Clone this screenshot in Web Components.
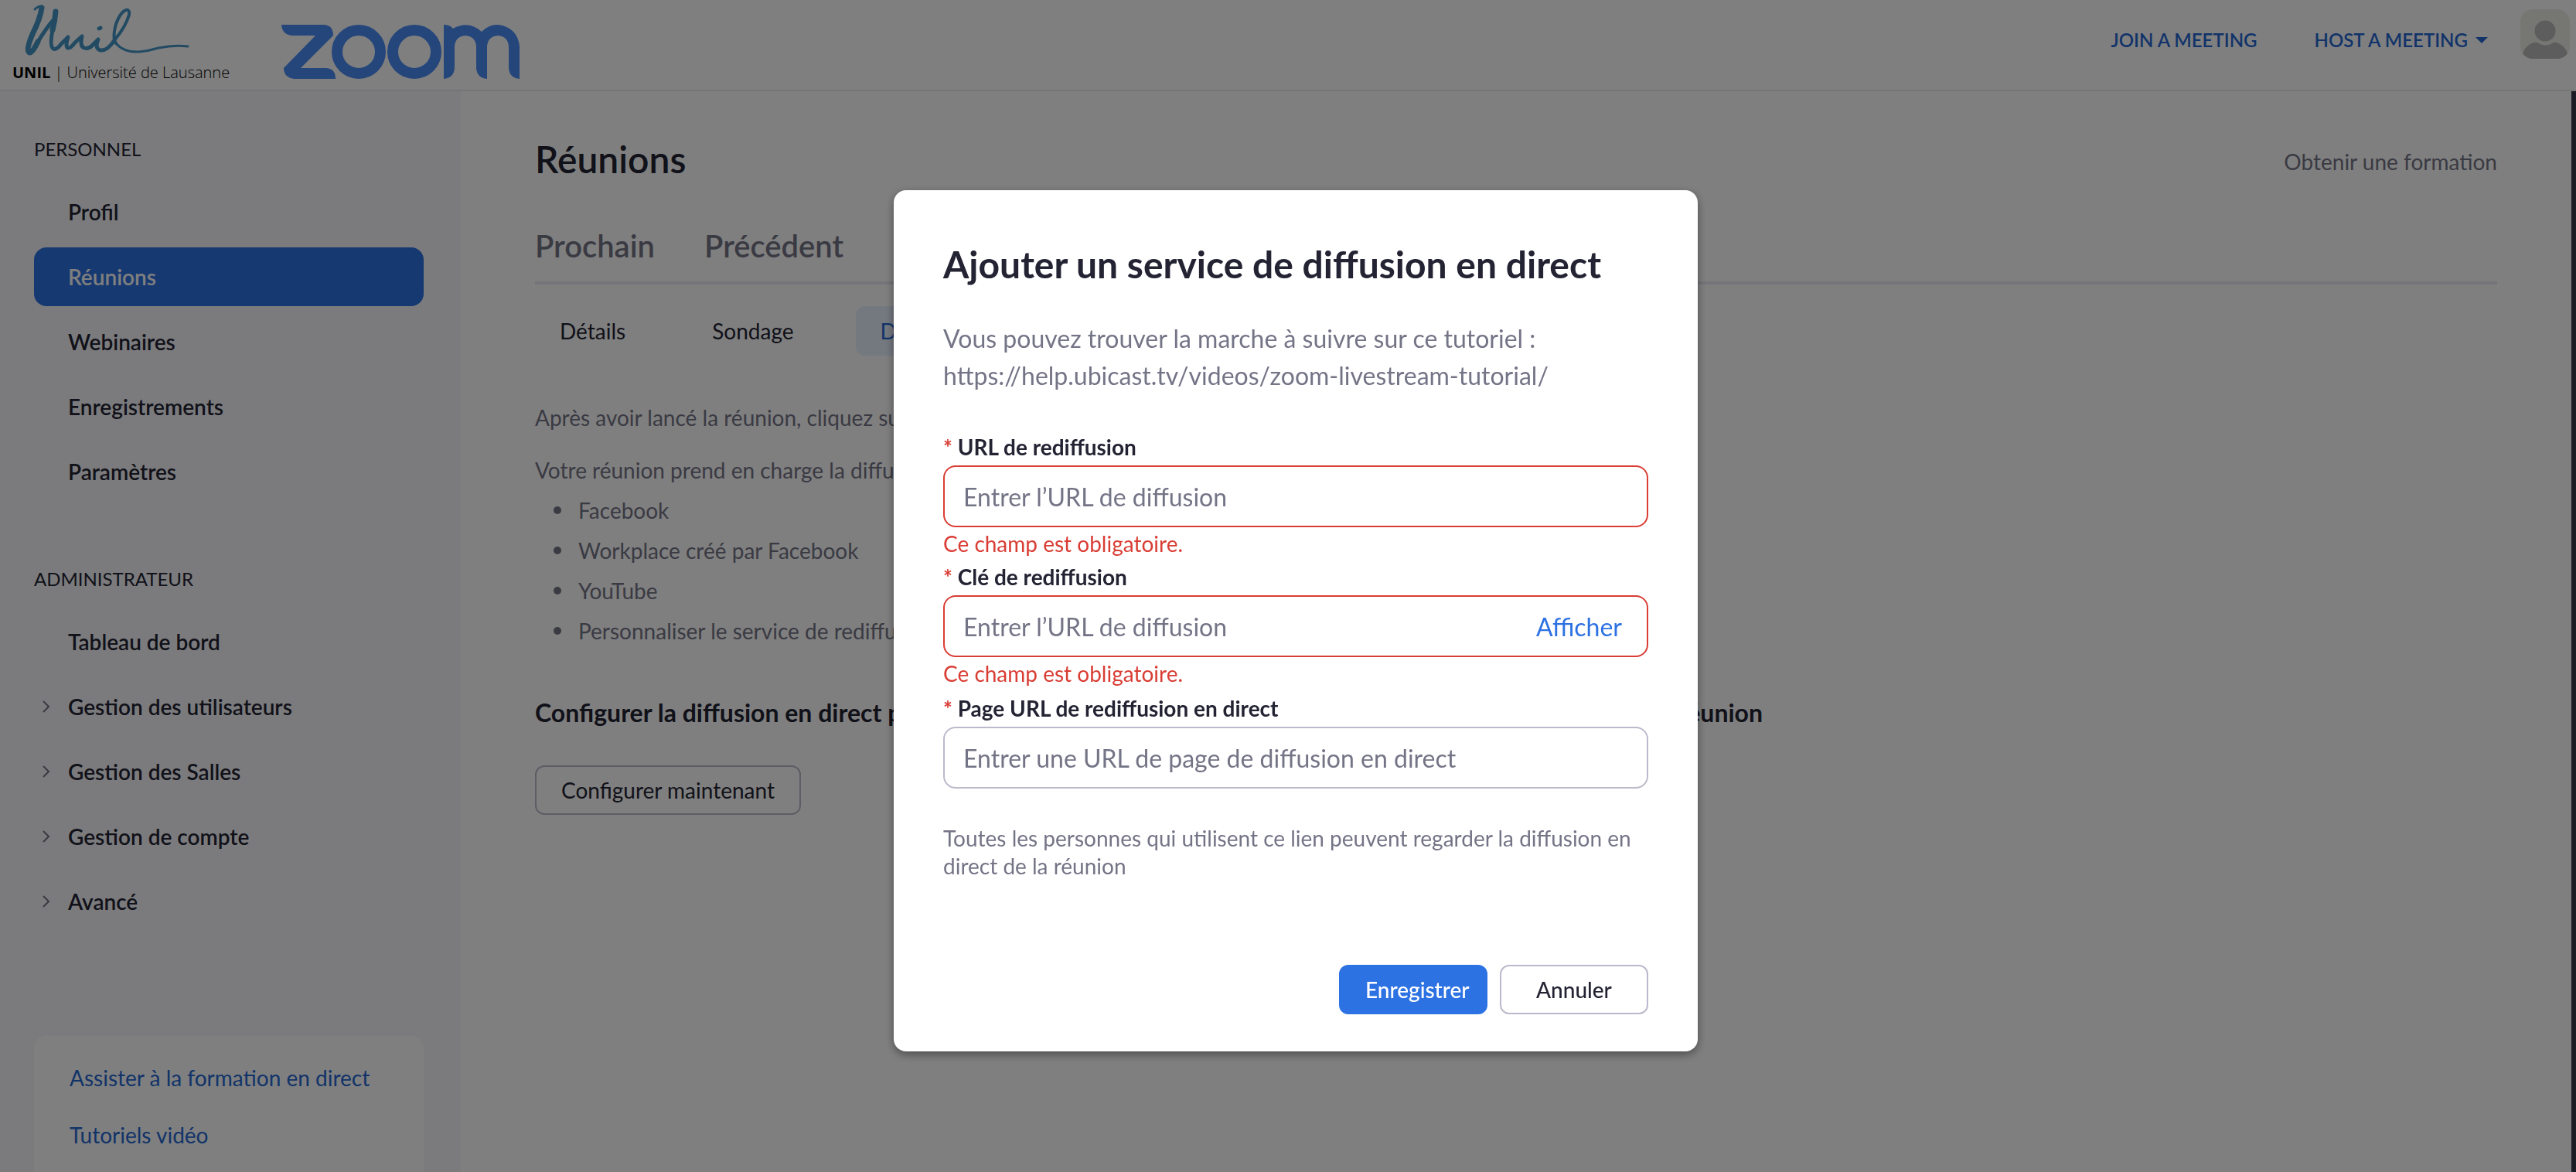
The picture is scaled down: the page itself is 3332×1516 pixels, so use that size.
<!DOCTYPE html>
<html lang="fr">
<head>
<meta charset="utf-8">
<title>Réunions - Zoom</title>
<style>
body {
	margin: 0;
	font-family: Lato, "Liberation Sans", sans-serif;
	font-size: 28px;
	color: #232333;
	background: #fff;
}
</style>
</head>
<body>
<zoom-app></zoom-app>

<script>
class BaseElement extends HTMLElement {
	constructor() {
		super();
		this.attachShadow({mode: 'open'});
	}
	render(html) {
		const tmpl = document.createElement('template');
		tmpl.innerHTML = html;
		this.shadowRoot.replaceChildren(tmpl.content.cloneNode(true));
	}
}

// Top bar: both logos on the left, meeting actions and avatar on the right
class TopBar extends BaseElement {
	connectedCallback() {
		this.render(`
<style>
:host {
	display: flex;
	align-items: flex-start;
	justify-content: space-between;
	height: 118px;
	box-sizing: border-box;
	padding: 0 8px 0 16px;
	background: #fff;
	border-bottom: 2px solid #ebebef;
}
a { color: #2467d3; text-decoration: none; }
.logos, nav { display: flex; align-items: flex-start; }
.logos { gap: 66px; }
.unil { width: 282px; color: #000; font: 300 20px/24px "Open Sans", "Noto Sans", sans-serif; white-space: nowrap; }
.unil b { font-weight: 700; }
.unil svg { margin: 4px 0 6px; }
.zoom { padding-top: 32px; }
svg { display: block; }
nav { font-size: 24px; line-height: 28px; font-weight: 600; }
.join { padding-top: 38px; margin-right: 74px; }
.host {
	display: flex;
	align-items: center;
	gap: 10px;
	margin: 38px 42px 0 0;
	padding: 0;
	border: 0;
	background: none;
	color: #2467d3;
	font: inherit;
}
.avatar { padding-top: 12px; }
</style>
<div class="logos">
	<a class="unil" href="#">
		<svg width="236" height="72" viewBox="16 4 236 72" fill="none" stroke="#4596c6" stroke-linecap="round" stroke-linejoin="round" aria-label="Unil" role="img">
			<path stroke-width="3" d="M45 12Q49 8 54 8"/>
			<path stroke-width="7" d="M54 10Q52 24 43 42Q34 62 37 67Q40 72 49 54"/>
			<path stroke-width="5" d="M49 54Q60 36 69 26"/>
			<path stroke-width="7" d="M72 15Q71 27 68 39"/>
			<path stroke-width="5" d="M68 39Q64 60 69 63Q73 65 79 57L88 48Q84 61 88 62Q91 63 97 55L106 47Q103 60 109 62Q115 64 121 57L127 51Q122 63 130 65Q139 66 148 52"/>
			<path stroke-width="4" d="M148 52Q163 34 167 19Q168 12 163 13Q156 15 150 31Q145 50 150 56"/>
			<path stroke-width="3" d="M150 56Q160 68 180 67Q192 66 205 62Q225 58 243 60"/>
			<path stroke-width="5" d="M128 37L130 36"/>
		</svg>
		<b>UNIL</b> | Université de Lausanne
	</a>
	<a class="zoom" href="#">
		<svg width="308" height="70" viewBox="0 0 308 70" fill="none" stroke="#4a8cf7" stroke-width="14" aria-label="zoom" role="img">
			<path fill="#4a8cf7" stroke="none" d="M0 0H54Q67 0 67 14L25 56H57Q70 56 70 70H16Q3 68 3 56L44 14H14Q1 13 0 0Z"/>
			<ellipse cx="100" cy="35" rx="28" ry="28"/>
			<ellipse cx="172" cy="35" rx="28" ry="28"/>
			<path fill="#4a8cf7" stroke="none" d="M210 0Q218 0 222 5Q242 -6 259 9Q271 -3 286 1Q306 7 308 28V70Q295 69 294 56V28Q293 15 280 14Q267 15 266 28V70Q253 69 252 56V28Q251 15 238 14Q225 15 224 28V56Q223 69 210 70Z"/>
		</svg>
	</a>
</div>
<nav>
	<a class="join" href="#">JOIN A MEETING</a>
	<button class="host">HOST A MEETING
		<svg width="16" height="8" viewBox="0 0 16 8"><path d="M0 0H16L8 8Z" fill="#2467d3"/></svg>
	</button>
	<a class="avatar" href="#" aria-label="Profil">
		<svg width="64" height="64" viewBox="0 0 64 64">
			<defs><clipPath id="r"><rect width="64" height="64" rx="16"/></clipPath></defs>
			<g clip-path="url(#r)">
				<rect width="64" height="64" fill="#edede7"/>
				<circle cx="32" cy="28" r="13.5" fill="#bababa"/>
				<path d="M2 64Q3 48 17 43H22Q32 50 43 43H47Q61 48 62 64Z" fill="#bababa"/>
			</g>
		</svg>
	</a>
</nav>`);
	}
}
customElements.define('top-bar', TopBar);

class SideItem extends BaseElement {
	connectedCallback() {
		const arrow = this.hasAttribute('expandable')
			? '<svg width="10" height="16" viewBox="0 0 10 16" fill="none" stroke="#747487" stroke-width="2"><path d="M1 1L8 8L1 15"/></svg>'
			: '';
		this.render(`
<style>
:host { display: block; }
a {
	display: flex;
	align-items: center;
	height: 76px;
	border-radius: 16px;
	color: #232333;
	font-weight: 600;
	text-decoration: none;
}
.arrow { width: 33px; padding-left: 11px; }
svg { display: block; }
:host([active]) a { background: #2d72e3; color: #fff; }
</style>
<a href="#"><span class="arrow">${arrow}</span><slot></slot></a>`);
	}
}
customElements.define('side-item', SideItem);

class SideBar extends BaseElement {
	connectedCallback() {
		this.render(`
<style>
:host {
	display: block;
	flex: 0 0 596px;
	box-sizing: border-box;
	padding: 56px 48px 0 44px;
	background: #f7f7fa;
}
h2 { margin: 0 0 24px; font-size: 24px; line-height: 38px; font-weight: 400; }
nav { display: flex; flex-direction: column; gap: 8px; margin-bottom: 82px; }
.help {
	display: flex;
	flex-direction: column;
	gap: 34px;
	margin-top: 136px;
	padding: 34px 46px 60px;
	border-radius: 16px;
	background: #fff;
}
.help a { color: #2467d3; line-height: 40px; text-decoration: none; }
</style>
<h2>PERSONNEL</h2>
<nav>
	<side-item>Profil</side-item>
	<side-item active>Réunions</side-item>
	<side-item>Webinaires</side-item>
	<side-item>Enregistrements</side-item>
	<side-item>Paramètres</side-item>
</nav>
<h2>ADMINISTRATEUR</h2>
<nav>
	<side-item>Tableau de bord</side-item>
	<side-item expandable>Gestion des utilisateurs</side-item>
	<side-item expandable>Gestion des Salles</side-item>
	<side-item expandable>Gestion de compte</side-item>
	<side-item expandable>Avancé</side-item>
</nav>
<div class="help">
	<a href="#">Assister à la formation en direct</a>
	<a href="#">Tutoriels vidéo</a>
</div>`);
	}
}
customElements.define('side-bar', SideBar);

class MeetingPage extends BaseElement {
	connectedCallback() {
		this.render(`
<style>
:host {
	display: block;
	flex: 1;
	padding: 58px 96px 0;
	border-right: 6px solid #39394d;
	color: #747487;
}
a { color: inherit; text-decoration: none; }
.head { display: flex; justify-content: space-between; align-items: center; }
.head a { padding-top: 6px; }
h1 { margin: 0; color: #232333; font-size: 48px; line-height: 60px; font-weight: 600; }
.tabs {
	display: flex;
	gap: 64px;
	margin-top: 54px;
	padding-bottom: 18px;
	border-bottom: 4px solid #e8e8f2;
	font-size: 40px;
	line-height: 56px;
	font-weight: 600;
}
.subtabs { display: flex; gap: 48px; margin: 28px 0 60px; color: #232333; }
.subtabs a { padding: 0 32px; border-radius: 12px; line-height: 64px; }
.subtabs .on { background: #e8f0ff; color: #2467d3; }
p { margin: 0 0 28px; line-height: 40px; }
ul { margin: -22px 0 58px; padding-left: 24px; list-style: none; line-height: 52px; }
li { display: flex; align-items: center; gap: 22px; }
li::before { content: ""; width: 10px; height: 10px; border-radius: 50%; background: #747487; }
h3 {
	display: flex;
	justify-content: space-between;
	max-width: 1588px;
	margin: 0 0 46px;
	color: #232333;
	font-size: 32px;
	line-height: 44px;
}
button {
	height: 64px;
	padding: 0 32px;
	border: 2px solid #babacc;
	border-radius: 12px;
	background: #fff;
	color: #232333;
	font: inherit;
}
</style>
<div class="head"><h1>Réunions</h1><a href="#">Obtenir une formation</a></div>
<div class="tabs"><a href="#">Prochain</a><a href="#">Précédent</a></div>
<div class="subtabs"><a href="#">Détails</a><a href="#">Sondage</a><a href="#" class="on">Direct</a></div>
<p>Après avoir lancé la réunion, cliquez sur</p>
<p>Votre réunion prend en charge la diffusion</p>
<ul>
	<li>Facebook</li>
	<li>Workplace créé par Facebook</li>
	<li>YouTube</li>
	<li>Personnaliser le service de rediffusion</li>
</ul>
<h3><span>Configurer la diffusion en direct par</span><span>réunion</span></h3>
<button>Configurer maintenant</button>`);
	}
}
customElements.define('meeting-page', MeetingPage);

// Labelled text box, with an optional error line and a slot at the right end of the box
class StreamField extends BaseElement {
	connectedCallback() {
		const error = this.getAttribute('error');
		this.render(`
<style>
:host { display: block; }
label { display: block; margin-bottom: 4px; line-height: 40px; font-weight: 700; }
label span { color: #d93d34; }
.box {
	display: flex;
	align-items: center;
	height: 80px;
	box-sizing: border-box;
	padding: 0 32px 0 24px;
	border: 2px solid #babacc;
	border-radius: 16px;
	font-size: 32px;
}
:host([error]) .box { border-color: #d93d34; }
input {
	flex: 1;
	min-width: 0;
	padding: 0;
	border: 0;
	outline: 0;
	background: none;
	color: inherit;
	font: inherit;
}
input::placeholder { color: #747487; opacity: 1; }
.error { padding-bottom: 2px; color: #d93d34; line-height: 42px; }
</style>
<label for="field"><span>*</span> ${this.getAttribute('label')}</label>
<div class="box"><input id="field" type="text" placeholder="${this.getAttribute('placeholder')}"><slot></slot></div>
${error ? `<div class="error">${error}</div>` : ''}`);
	}
}
customElements.define('stream-field', StreamField);

class StreamDialog extends BaseElement {
	connectedCallback() {
		this.render(`
<style>
/* backdrop over the whole page */
:host {
	position: fixed;
	inset: 0;
	display: flex;
	justify-content: center;
	align-items: flex-start;
	padding: 246px 0 0 20px;
	background: rgba(0, 0, 0, .5);
}
section {
	width: 1040px;
	box-sizing: border-box;
	padding: 64px 64px 48px;
	border-radius: 16px;
	background: #fff;
	box-shadow: 0 4px 12px rgba(0, 0, 0, .4);
}
h2 { margin: 0; font-size: 48px; line-height: 64px; font-weight: 700; }
.intro { margin: 40px 0 48px; color: #747487; font-size: 32px; line-height: 48px; }
.last { margin-top: 2px; }
.note { margin: 46px 0 110px; color: #747487; line-height: 36px; }
.show { padding: 0; border: 0; background: none; color: #2d72e3; font-size: 32px; font-family: inherit; }
.actions { display: flex; justify-content: flex-end; gap: 16px; }
.actions button {
	width: 192px;
	height: 64px;
	border: 2px solid #babacc;
	border-radius: 12px;
	background: #fff;
	color: #232333;
	font: inherit;
	font-weight: 500;
}
.actions .primary { padding: 0 22px 0 32px; background: #2d72e3; border-color: #2d72e3; color: #fff; }
</style>
<section role="dialog" aria-labelledby="title">
	<h2 id="title">Ajouter un service de diffusion en direct</h2>
	<p class="intro">Vous pouvez trouver la marche à suivre sur ce tutoriel :<br>https://help.ubicast.tv/videos/zoom-livestream-tutorial/</p>
	<stream-field label="URL de rediffusion" placeholder="Entrer l’URL de diffusion" error="Ce champ est obligatoire."></stream-field>
	<stream-field label="Clé de rediffusion" placeholder="Entrer l’URL de diffusion" error="Ce champ est obligatoire."><button class="show">Afficher</button></stream-field>
	<stream-field class="last" label="Page URL de rediffusion en direct" placeholder="Entrer une URL de page de diffusion en direct"></stream-field>
	<p class="note">Toutes les personnes qui utilisent ce lien peuvent regarder la diffusion en direct de la réunion</p>
	<div class="actions"><button class="primary">Enregistrer</button><button>Annuler</button></div>
</section>`);
	}
}
customElements.define('stream-dialog', StreamDialog);

class ZoomApp extends BaseElement {
	connectedCallback() {
		this.render(`
<style>
:host { display: flex; flex-direction: column; height: 100vh; overflow: hidden; }
top-bar { flex: none; }
main { display: flex; flex: 1; min-height: 0; }
</style>
<top-bar></top-bar>
<main><side-bar></side-bar><meeting-page></meeting-page></main>
<stream-dialog></stream-dialog>`);
	}
}
customElements.define('zoom-app', ZoomApp);
</script>
</body>
</html>
